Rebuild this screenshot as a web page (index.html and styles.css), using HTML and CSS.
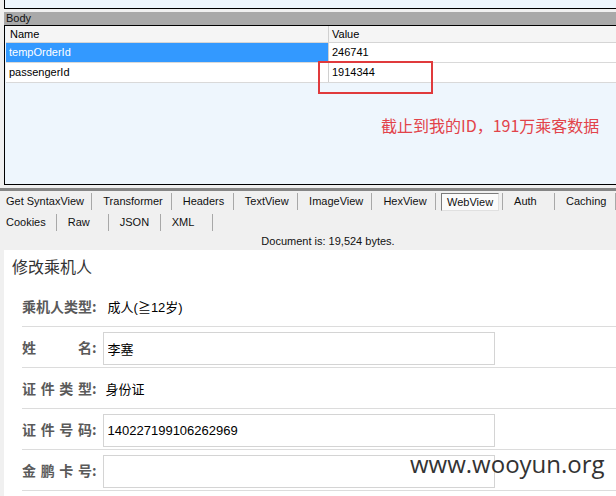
FILE: index.html
```html
<!DOCTYPE html>
<html lang="zh-CN">
<head>
<meta charset="utf-8">
<title>Fiddler WebView</title>
<link rel="stylesheet" href="styles.css">
</head>
<body>
<div class="fiddler">
  <div class="top-pane"></div>
  <div class="section-bar">Body</div>
  <div class="grid-pane">
    <div class="grid-row grid-head"><div class="c1">Name</div><div class="c2">Value</div></div>
    <div class="grid-row selected"><div class="c1">tempOrderId</div><div class="c2">246741</div></div>
    <div class="grid-row"><div class="c1">passengerId</div><div class="c2">1914344</div></div>
  </div>
  <div class="splitter"></div>
  <div class="tabs">
    <div class="tab-row">
      <div class="tab first">Get SyntaxView</div>
      <div class="tab">Transformer</div>
      <div class="tab">Headers</div>
      <div class="tab">TextView</div>
      <div class="tab">ImageView</div>
      <div class="tab">HexView</div>
      <div class="tab active"><span class="tab-box">WebView</span></div>
      <div class="tab">Auth</div>
      <div class="tab">Caching</div>
    </div>
    <div class="tab-row">
      <div class="tab first">Cookies</div>
      <div class="tab">Raw</div>
      <div class="tab">JSON</div>
      <div class="tab">XML</div>
    </div>
  </div>
  <div class="doc-info">Document is: 19,524 bytes.</div>
  <div class="webview">
    <div class="page-title">修改乘机人</div>
    <div class="form">
      <div class="form-row">
        <span class="label"><span class="label-text">乘机人类型</span>:</span>
        <span class="value">成人(≧12岁)</span>
      </div>
      <div class="form-row">
        <span class="label"><span class="label-text">姓名</span>:</span>
        <input class="field" type="text" value="李塞">
      </div>
      <div class="form-row">
        <span class="label"><span class="label-text">证件类型</span>:</span>
        <span class="value value-id">身份证</span>
      </div>
      <div class="form-row">
        <span class="label"><span class="label-text">证件号码</span>:</span>
        <input class="field" type="text" value="140227199106262969">
      </div>
      <div class="form-row">
        <span class="label"><span class="label-text">金鹏卡号</span>:</span>
        <input class="field" type="text" value="">
      </div>
    </div>
  </div>
  <div class="mark-box"></div>
  <div class="mark-note">截止到我的ID，191万乘客数据</div>
  <div class="watermark">www.wooyun.org</div>
</div>
</body>
</html>
```
FILE: styles.css
```css
html, body {
  margin: 0;
  padding: 0;
}
body {
  background: #f0f0f0;
  font-family: "Liberation Sans", Arial, sans-serif;
  font-size: 11px;
  color: #000;
  width: 616px;
  height: 496px;
  overflow: hidden;
}
.fiddler {
  position: relative;
  width: 616px;
  height: 496px;
  overflow: hidden;
}
.top-pane {
  height: 8px;
  margin-left: 4px;
  background: #eef6fd;
  border-left: 1px solid #000;
  border-bottom: 1px solid #000;
}
.section-bar {
  margin-top: 3px;
  margin-left: 4px;
  height: 13px;
  line-height: 13px;
  padding-left: 2px;
  background: #a9a9a9;
  border-bottom: 1px solid #000;
  color: #111;
}
.grid-pane {
  margin-left: 4px;
  height: 158px;
  background: #eef6fd;
  border-left: 1px solid #000;
  border-bottom: 1px solid #000;
  padding-left: 1px;
}
.grid-row {
  display: flex;
  height: 19px;
  line-height: 19px;
  background: #fff;
  border-bottom: 1px solid #d9d9d9;
}
.grid-row .c1 {
  width: 322px;
  padding-left: 3px;
  box-sizing: border-box;
}
.grid-row .c2 {
  flex: 1;
  padding-left: 3px;
  border-left: 1px solid #d0d0d0;
}
.grid-head {
  height: 16px;
  line-height: 16px;
  background: #f5f5f5;
  border-bottom: 1px solid #d5d5d5;
}
.grid-head .c1 {
  padding-left: 4px;
}
.selected .c1 {
  background: #3399ff;
  color: #fff;
}
.splitter {
  margin-top: 3px;
  height: 3px;
  background: #858585;
}
.tab-row {
  display: flex;
  height: 21px;
  white-space: nowrap;
}
.tab {
  margin-top: 2px;
  height: 17px;
  line-height: 17px;
  padding: 0 10px 0 11px;
  min-width: 52px;
  box-sizing: border-box;
  border-right: 1px solid #a8a8a8;
  color: #111;
}
.tab.first {
  padding-left: 6px;
}
.tab.active {
  padding-left: 5px;
  padding-right: 5px;
}
.tab-box {
  display: inline-block;
  height: 16px;
  line-height: 16px;
  padding: 0 5px;
  background: #fbfbfb;
  border-top: 1px solid #7c7c7c;
  border-left: 1px solid #7c7c7c;
  border-right: 1px solid #e0e0e0;
  border-bottom: 1px solid #e0e0e0;
}
.doc-info {
  height: 17px;
  line-height: 17px;
  padding-left: 40px;
  text-align: center;
  color: #111;
}
.webview {
  margin-left: 4px;
  height: 246px;
  background: #fff;
  padding-top: 6px;
  box-sizing: border-box;
  font-family: "Liberation Sans", "Noto Sans CJK SC", sans-serif;
}
.page-title {
  margin-left: 8px;
  font-family: "Noto Sans CJK SC", sans-serif;
  font-size: 16px;
  line-height: 20px;
  color: #333;
}
.form {
  margin-left: 18px;
  margin-top: 10px;
}
.form-row {
  display: flex;
  align-items: center;
  height: 40px;
  border-bottom: 1px solid #dcdcdc;
}
.label {
  display: flex;
  align-items: center;
  font-family: "Noto Sans CJK SC", sans-serif;
  font-size: 14px;
  font-weight: bold;
  color: #5a5a5a;
}
.label-text {
  display: inline-block;
  width: 70px;
  text-align: justify;
  text-align-last: justify;
  text-justify: inter-character;
}
.value {
  margin-left: 11px;
  font-size: 13px;
  color: #000;
}
.value-id {
  margin-left: 9px;
}
.field {
  margin: 3px 0 0 6px;
  width: 392px;
  height: 33px;
  box-sizing: border-box;
  border: 1px solid #d4d4d4;
  padding: 0 0 0 4px;
  font-family: "Liberation Sans", "Noto Sans CJK SC", sans-serif;
  font-size: 13px;
  color: #000;
  background: #fff;
  outline: none;
}
.mark-box {
  position: absolute;
  left: 318px;
  top: 61px;
  width: 115px;
  height: 33px;
  box-sizing: border-box;
  border: 2px solid #e03a3c;
}
.mark-note {
  position: absolute;
  left: 381px;
  top: 115px;
  font-family: "Noto Sans CJK SC", sans-serif;
  font-size: 16px;
  line-height: 20px;
  color: #e2434a;
  white-space: nowrap;
}
.watermark {
  position: absolute;
  left: 410px;
  top: 448px;
  font-family: "Open Sans", sans-serif;
  font-size: 24px;
  line-height: 32px;
  color: #333;
  white-space: nowrap;
}
```
